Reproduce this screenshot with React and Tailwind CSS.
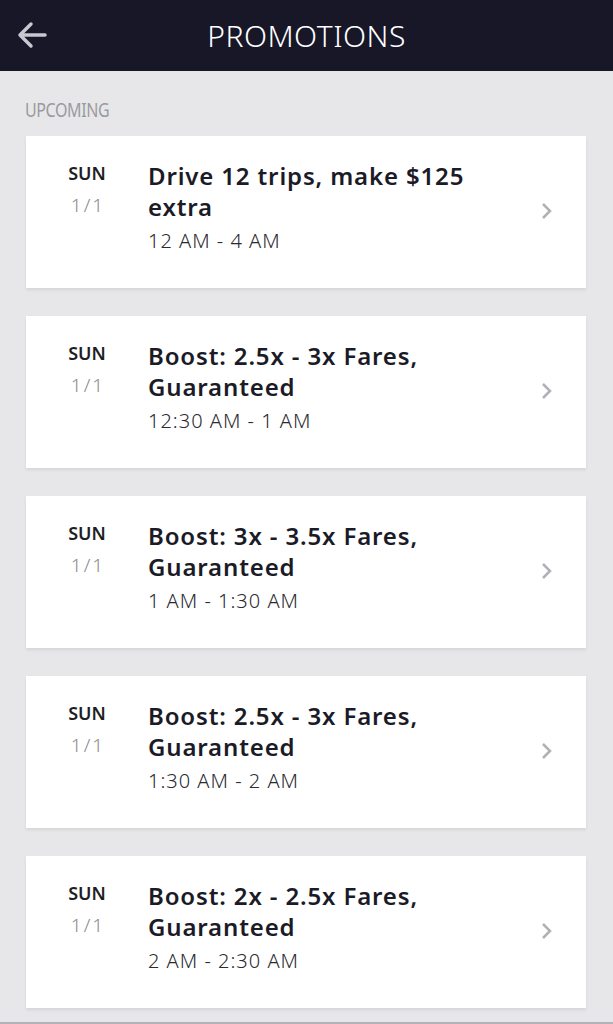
import React from 'react';

const promos = [
  { title: ['Drive 12 trips, make $125', 'extra'], time: '12 AM - 4 AM' },
  { title: ['Boost: 2.5x - 3x Fares,', 'Guaranteed'], time: '12:30 AM - 1 AM' },
  { title: ['Boost: 3x - 3.5x Fares,', 'Guaranteed'], time: '1 AM - 1:30 AM' },
  { title: ['Boost: 2.5x - 3x Fares,', 'Guaranteed'], time: '1:30 AM - 2 AM' },
  { title: ['Boost: 2x - 2.5x Fares,', 'Guaranteed'], time: '2 AM - 2:30 AM' },
];

const PromoCard = ({ promo }) => (
  <div className="flex items-center bg-white h-[152px] shadow-[0_2px_3px_rgba(0,0,0,0.08)]">
    <div className="flex flex-1 self-start pt-[25px]">
      <div className="w-[122px] flex flex-col items-center">
        <span className="text-[18px] leading-[24px] font-semibold text-[#1e1e24]">SUN</span>
        <span className="text-[19px] leading-[24px] mt-[8px] font-light tracking-[2px] pl-[2px] text-[#8a8a90]">1/1</span>
      </div>
      <div className="flex flex-col">
        <div className="text-[24px] leading-[31px] font-semibold tracking-[0.85px] -mt-[1px] text-[#1b1b28]">
          {promo.title.map((line, i) => (
            <div key={i}>{line}</div>
          ))}
        </div>
        <div className="mt-[7px] text-[20px] leading-[24px] font-light tracking-[1px] text-[#2a2a30]">{promo.time}</div>
      </div>
    </div>
    <svg width="14" height="20" viewBox="0 0 14 20" className="mr-[32px] mt-[-2px]">
      <path d="M3 3 L10 10 L3 17" fill="none" stroke="#b0b0b6" strokeWidth="2.5" />
    </svg>
  </div>
);

const App = () => {
  return (
    <div
      className="w-[613px] h-[1024px] bg-[#e7e7e9] flex flex-col overflow-hidden"
      style={{ fontFamily: '"Noto Sans", "Open Sans", sans-serif' }}
    >
      <div className="h-[71px] bg-[#171728] flex items-center relative shrink-0">
        <svg width="32" height="32" viewBox="0 0 32 32" className="absolute left-[16px] top-[19px]">
          <path d="M29 16 H5 M15 5 L4 16 L15 27" fill="none" stroke="#c8c8d0" strokeWidth="3.5" strokeLinecap="round" strokeLinejoin="round" />
        </svg>
        <h1 className="w-full text-center text-white text-[30px] font-light tracking-[0.5px]">PROMOTIONS</h1>
      </div>
      <div className="px-[26px] pt-[27px] flex flex-col flex-1">
        <div className="text-[20px] leading-[24px] text-[#9a9aa0] mb-[14px] tracking-[-0.5px] -ml-[1px] origin-left scale-x-[0.8]">UPCOMING</div>
        <div className="flex flex-col gap-[28px] pr-[1px]">
          {promos.map((p, i) => (
            <PromoCard key={i} promo={p} />
          ))}
        </div>
      </div>
      <div className="h-[2px] bg-[#b4b4b8] shrink-0" />
    </div>
  );
};

export default App;
